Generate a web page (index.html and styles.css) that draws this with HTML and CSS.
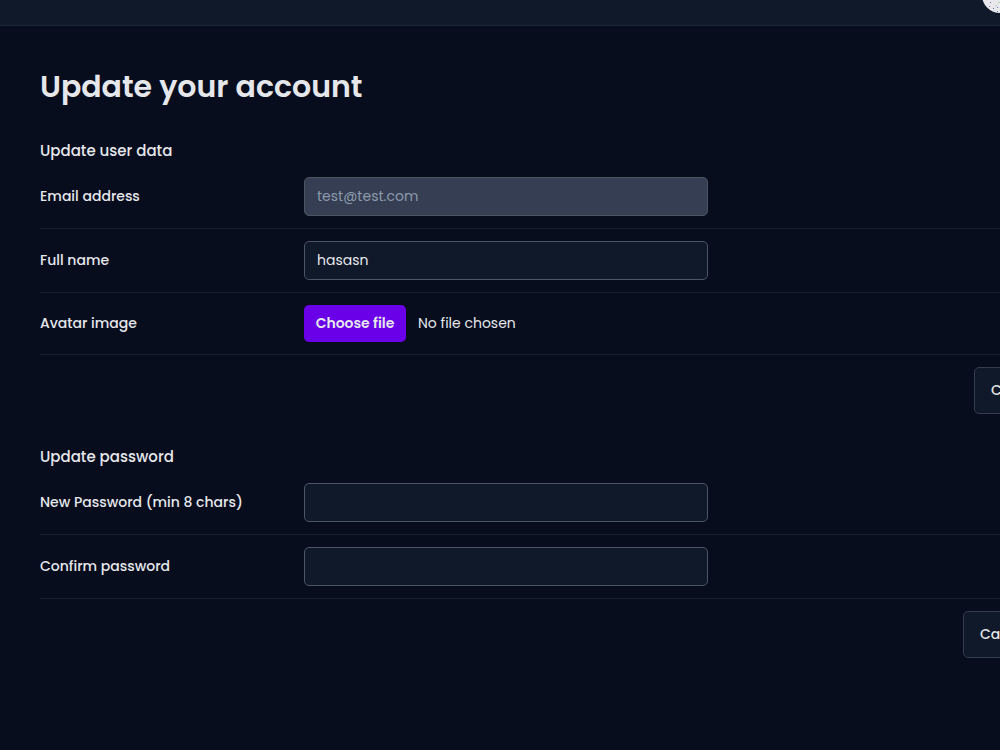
FILE: index.html
```html
<!DOCTYPE html>
<html lang="en">

<head>
    <meta charset="UTF-8">
    <meta name="viewport" content="width=device-width, initial-scale=1.0">
    <title>Update your account</title>
    <link rel="stylesheet" href="styles.css">
</head>

<body>

    <header class="header">
        <svg class="avatar" viewBox="0 0 36 36">
            <circle cx="18" cy="18" r="18" fill="#e8e8ec" />
            <g fill="#6b74b5">
                <rect x="8" y="25" width="1" height="1" />
                <rect x="7" y="29" width="1" height="1" />
                <rect x="11" y="31" width="1" height="1" />
                <rect x="15" y="30" width="1" height="1" />
                <rect x="15" y="34" width="1" height="1" />
                <rect x="9" y="22" width="1" height="1" />
            </g>
            <g fill="#b5d3bd">
                <rect x="13" y="28" width="2" height="1" />
                <rect x="16" y="25" width="2" height="1" />
                <rect x="12" y="33" width="1" height="1" />
            </g>
        </svg>
    </header>

    <main class="main">
        <h1>Update your account</h1>

        <!-- User data -->
        <h3>Update user data</h3>
        <form class="form">
            <div class="form-row">
                <label for="email">Email address</label>
                <input type="text" id="email" value="test@test.com" disabled>
            </div>
            <div class="form-row">
                <label for="fullName">Full name</label>
                <input type="text" id="fullName" value="hasasn">
            </div>
            <div class="form-row file-row">
                <label for="avatar">Avatar image</label>
                <div class="file-input">
                    <button type="button" id="avatar" class="file-button">Choose file</button>
                    <span class="file-name">No file chosen</span>
                </div>
            </div>
            <div class="form-actions">
                <button type="reset" class="btn">Cancel</button>
                <button type="button" class="btn btn-primary">Update account</button>
            </div>
        </form>

        <!-- Password -->
        <h3>Update password</h3>
        <form class="form">
            <div class="form-row">
                <label for="password">New Password (min 8 chars)</label>
                <input type="password" id="password">
            </div>
            <div class="form-row">
                <label for="passwordConfirm">Confirm password</label>
                <input type="password" id="passwordConfirm">
            </div>
            <div class="form-actions">
                <button type="reset" class="btn">Cancel</button>
                <button type="button" class="btn btn-primary btn-wide">Update password</button>
            </div>
        </form>
    </main>

</body>

</html>
```

FILE: styles.css
```css
* {
    box-sizing: border-box;
    margin: 0;
    padding: 0;
}

html {
    overflow: hidden;
    background-color: #080d1e;
}

body {
    width: 1272px;
    height: 750px;
    overflow: hidden;
    font-family: Poppins, sans-serif;
    font-size: 14px;
    line-height: 22px;
    color: #e5e7eb;
    background-color: #080d1e;
}

input,
button {
    font: inherit;
    color: inherit;
}

.header {
    display: flex;
    justify-content: flex-end;
    align-items: flex-end;
    height: 26px;
    padding: 0 254px 12px 40px;
    overflow: hidden;
    background-color: #101929;
    border-bottom: 1px solid #1c2636;
}

.avatar {
    flex: none;
    width: 36px;
    height: 36px;
}

.main {
    padding: 38px 40px;
}

h1 {
    height: 45px;
    margin-bottom: 31px;
    font-size: 30px;
    font-weight: 600;
    line-height: 45px;
}

h3 {
    height: 25px;
    font-size: 15px;
    font-weight: 500;
    line-height: 22px;
}

.form {
    margin-bottom: 32px;
}

.form-row {
    display: grid;
    grid-template-columns: 240px 404px;
    gap: 24px;
    align-items: center;
    height: 64px;
    border-bottom: 1px solid #18202f;
}

.form-row label {
    padding-bottom: 2px;
    font-weight: 500;
}

.form-row input {
    height: 39px;
    padding: 0 12px;
    background-color: #101929;
    border: 1px solid #4b5563;
    border-radius: 5px;
}

.form-row input:disabled {
    color: #8c9bad;
    background-color: #353e52;
}

.file-row {
    height: 62px;
}

.file-input {
    display: flex;
    align-items: center;
    gap: 12px;
}

.file-button {
    width: 102px;
    height: 37px;
    padding-bottom: 2px;
    font-weight: 600;
    background-color: #6a00e8;
    border: none;
    border-radius: 5px;
}

.file-name {
    padding-bottom: 2px;
}

.form-actions {
    display: flex;
    justify-content: flex-end;
    gap: 12px;
    padding-top: 12px;
}

.btn {
    width: 84px;
    height: 47px;
    padding-bottom: 2px;
    font-weight: 500;
    background-color: #101929;
    border: 1px solid #343d4d;
    border-radius: 5px;
}

.btn-primary {
    width: 162px;
    background-color: #6a00e8;
    border: none;
}

.btn-wide {
    width: 173px;
}
```
